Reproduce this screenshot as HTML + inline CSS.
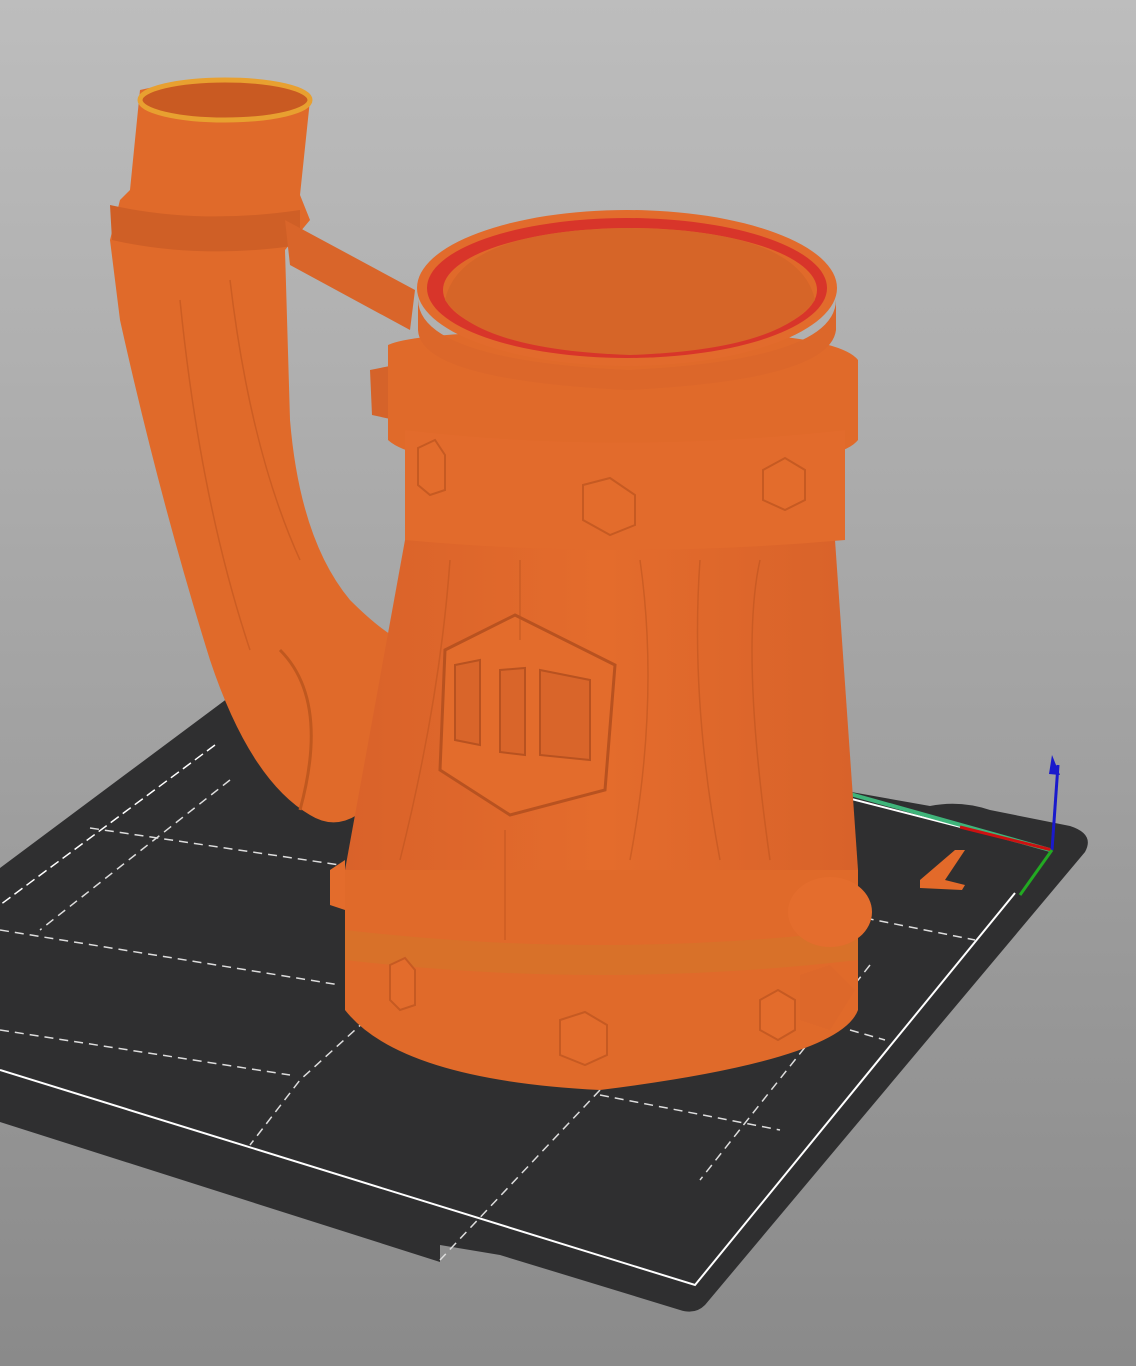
<!DOCTYPE html>
<html><head><meta charset="utf-8"><style>
html,body{margin:0;padding:0;width:1136px;height:1366px;overflow:hidden}
svg{display:block}
</style></head><body>
<svg width="1136" height="1366" viewBox="0 0 1136 1366" xmlns="http://www.w3.org/2000/svg">
<defs>
<linearGradient id="bg" x1="0" y1="0" x2="0" y2="1">
<stop offset="0" stop-color="#bdbdbd"/><stop offset="1" stop-color="#8a8a8a"/>
</linearGradient>
<linearGradient id="body" x1="0" y1="0" x2="1" y2="0">
<stop offset="0" stop-color="#d9622a"/><stop offset="0.5" stop-color="#e46c2c"/><stop offset="1" stop-color="#d8622a"/>
</linearGradient>
</defs>
<rect width="1136" height="1366" fill="url(#bg)"/>
<!-- bed -->
<path d="M0,868 L228,698 L840,790 L930,806 Q960,800 990,810 L1070,826 Q1095,834 1085,852 L705,1305 Q695,1315 680,1310 L500,1255 L440,1245 L440,1262 L0,1122 Z" fill="#2f2f30"/>
<path d="M0,1070 L695,1285 L1015,893" fill="none" stroke="#fff" stroke-width="2"/>
<path d="M836,795 L1050,850" stroke="#fff" stroke-width="2"/>
<path d="M215,745 L0,905" stroke="#fff" stroke-width="1.5" stroke-dasharray="10,5"/>
<g stroke="#ddd" stroke-width="1.5" stroke-dasharray="9,6" fill="none">
<path d="M90,828 L340,865"/><path d="M0,930 L340,985"/>
<path d="M850,915 L975,940"/><path d="M850,1030 L885,1040"/>
<path d="M0,1030 L290,1075 M600,1095 L780,1130"/>
<path d="M230,780 L40,930"/>
<path d="M410,980 L300,1080 L250,1145"/>
<path d="M600,1090 L440,1260"/>
<path d="M870,965 L700,1180"/>
</g>
<!-- axes -->
<path d="M836,790 L1050,850" stroke="#3fb47a" stroke-width="4"/>
<path d="M960,827 L1052,850" stroke="#cc1111" stroke-width="3"/>
<path d="M1052,850 L1058,765" stroke="#1a1acc" stroke-width="3"/>
<path d="M1052,755 L1060,775 L1049,774 Z" fill="#1a1acc"/>
<path d="M1052,850 L1020,895" stroke="#22aa22" stroke-width="3"/>
<path d="M920,880 L955,850 L965,850 L945,880 L965,885 L962,890 L920,888Z" fill="#e36a2a"/>
<!-- horn handle -->
<path d="M140,90 Q225,70 310,100 L300,195 L310,220 L285,250 L290,420 Q300,540 350,600 Q380,630 400,640 L390,780 Q350,840 310,815 Q250,780 210,660 Q160,500 120,320 L110,240 L120,200 L130,190 Z" fill="#e06a2a"/>
<path d="M110,205 Q200,225 300,210 L300,245 Q200,260 112,240 Z" fill="#cf5f26"/>
<ellipse cx="225" cy="100" rx="85" ry="20" fill="#c95a22" stroke="#e8a030" stroke-width="5"/>
<path d="M285,220 L415,290 L410,330 L290,265 Z" fill="#d9652a"/>
<path d="M370,370 L395,365 L395,420 L372,415Z" fill="#d5632a"/>
<!-- body -->
<path d="M405,540 L835,540 L858,870 L345,870 Z" fill="url(#body)"/>
<path d="M388,345 Q420,330 628,330 Q835,330 858,360 L858,440 Q835,470 628,470 Q420,470 388,440 Z" fill="#e06a2a"/>
<path d="M405,430 Q620,455 845,430 L845,540 Q620,560 405,540 Z" fill="#e26b2c"/>
<ellipse cx="627" cy="288" rx="210" ry="78" fill="#e26b2c"/>
<ellipse cx="627" cy="288" rx="200" ry="70" fill="#d8352a"/>
<ellipse cx="630" cy="290" rx="187" ry="62" fill="#e06a2a"/>
<path d="M445,300 Q460,230 630,228 Q800,230 815,300 Q780,350 630,355 Q480,350 445,300Z" fill="#d66528"/>
<path d="M418,300 Q420,360 628,370 Q835,360 836,300 L836,330 Q830,380 628,390 Q420,380 418,330 Z" fill="#dc672a"/>
<path d="M345,870 L858,870 L858,1010 Q840,1060 600,1090 Q400,1080 345,1010 Z" fill="#e06a2a"/>
<path d="M345,930 Q600,960 858,930 L858,960 Q600,990 345,960 Z" fill="#d4752a" opacity="0.7"/>
<path d="M330,870 L345,860 L345,910 L330,905Z" fill="#e36c2c"/>
<ellipse cx="830" cy="912" rx="42" ry="35" fill="#e46d2d"/>
<path d="M800,975 L830,965 L855,990 L830,1030 L800,1020Z" fill="#dd682a"/>
<!-- hex bolts -->
<g fill="#e36c2c" stroke="#c65a22" stroke-width="2">
<path d="M583,485 L610,478 L635,495 L635,525 L610,535 L583,520Z"/>
<path d="M763,470 L785,458 L805,470 L805,500 L785,510 L763,500Z"/>
<path d="M418,448 L435,440 L445,455 L445,490 L430,495 L418,485Z"/>
<path d="M560,1020 L585,1012 L607,1025 L607,1055 L585,1065 L560,1055Z"/>
<path d="M760,1000 L778,990 L795,1000 L795,1030 L778,1040 L760,1030Z"/>
<path d="M390,965 L405,958 L415,970 L415,1005 L400,1010 L390,1000Z"/>
</g>
<!-- logo hex -->
<path d="M515,615 L615,665 L605,790 L510,815 L440,770 L445,650 Z" fill="#e36c2c" stroke="#b85220" stroke-width="3"/>
<g fill="#d9652a" stroke="#b85220" stroke-width="2">
<path d="M455,665 L480,660 L480,745 L455,740Z"/><path d="M500,670 L525,668 L525,755 L500,752Z"/>
<path d="M540,670 L590,680 L590,760 L540,755Z"/>
</g>
<!-- wood grain hints -->
<g stroke="#bf5520" stroke-width="1.5" fill="none" opacity="0.6">
<path d="M700,560 Q690,700 720,860"/><path d="M760,560 Q740,650 770,860"/>
<path d="M450,560 Q440,700 400,860"/><path d="M640,560 Q660,700 630,860"/>
<path d="M180,300 Q200,500 250,650"/><path d="M230,280 Q250,450 300,560"/>
<path d="M520,560 L520,640"/><path d="M505,830 L505,940"/>
</g>
<path d="M280,650 Q330,700 300,810" stroke="#c0581f" stroke-width="3" fill="none"/>
</svg>
</body></html>
